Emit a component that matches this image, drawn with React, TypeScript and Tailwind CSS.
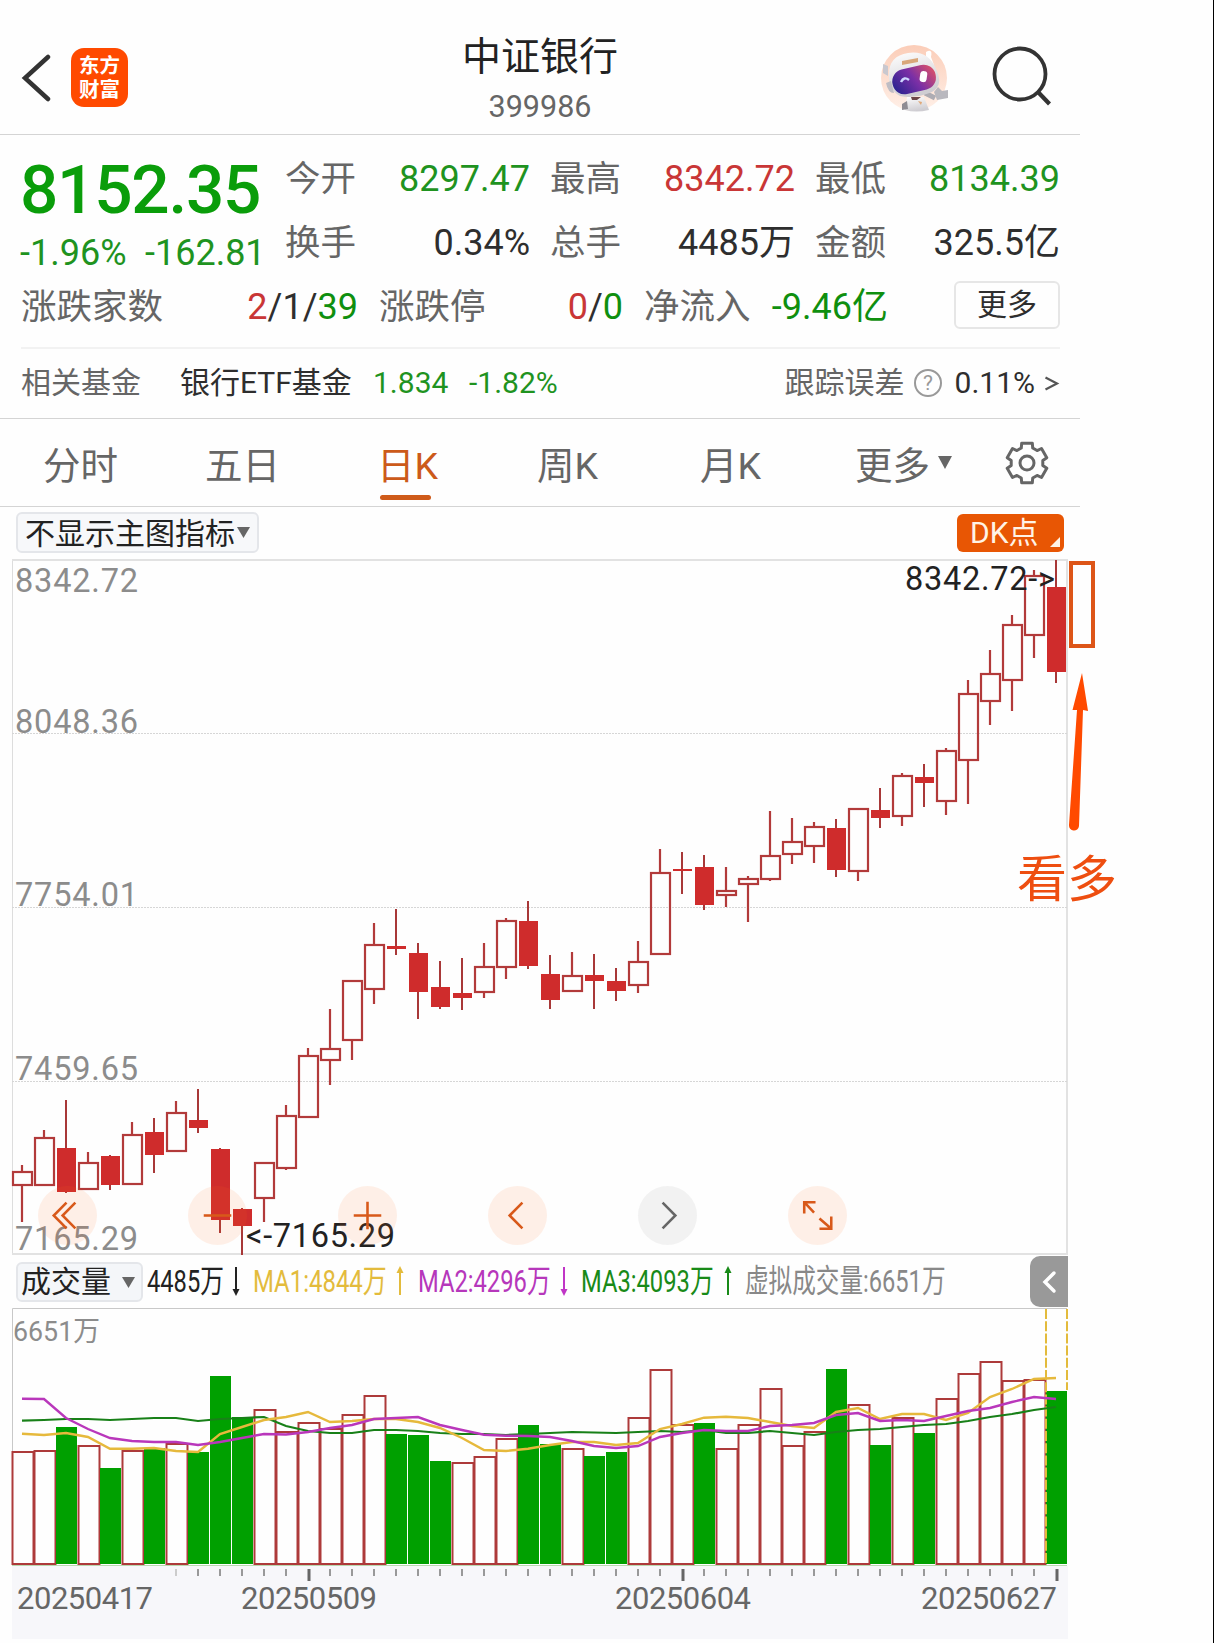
import React from 'react';

// [high, top, bottom, low, kind] in chart pixels, kind: 'h' hollow (up), 'f' filled (down)
type Candle = [number, number, number, number, 'h' | 'f'];

const candles: Candle[] = [
  [1165, 1171, 1186, 1222, 'h'],
  [1130, 1137, 1186, 1186, 'h'],
  [1100, 1148, 1192, 1193, 'f'],
  [1152, 1162, 1190, 1190, 'h'],
  [1155, 1156, 1185, 1190, 'f'],
  [1122, 1134, 1185, 1185, 'h'],
  [1118, 1132, 1155, 1173, 'f'],
  [1101, 1112, 1152, 1152, 'h'],
  [1089, 1120, 1128, 1133, 'f'],
  [1148, 1149, 1220, 1233, 'f'],
  [1208, 1209, 1226, 1255, 'f'],
  [1162, 1162, 1199, 1222, 'h'],
  [1105, 1115, 1169, 1170, 'h'],
  [1048, 1055, 1118, 1118, 'h'],
  [1009, 1048, 1061, 1085, 'h'],
  [980, 980, 1041, 1060, 'h'],
  [923, 944, 990, 1004, 'h'],
  [909, 946, 949, 955, 'f'],
  [943, 953, 992, 1019, 'f'],
  [961, 987, 1007, 1009, 'f'],
  [958, 993, 998, 1010, 'f'],
  [943, 966, 993, 998, 'h'],
  [918, 920, 968, 979, 'h'],
  [901, 921, 966, 969, 'f'],
  [955, 974, 1000, 1009, 'f'],
  [952, 975, 992, 992, 'h'],
  [954, 975, 981, 1009, 'f'],
  [968, 981, 991, 1001, 'f'],
  [941, 961, 986, 993, 'h'],
  [849, 872, 955, 955, 'h'],
  [852, 869, 871, 894, 'f'],
  [855, 867, 905, 910, 'f'],
  [867, 890, 896, 907, 'h'],
  [876, 878, 885, 922, 'h'],
  [811, 855, 880, 881, 'h'],
  [818, 841, 855, 864, 'h'],
  [822, 826, 847, 863, 'h'],
  [819, 828, 870, 877, 'f'],
  [808, 808, 872, 881, 'h'],
  [788, 810, 818, 828, 'f'],
  [773, 775, 817, 826, 'h'],
  [764, 777, 783, 807, 'f'],
  [748, 750, 802, 815, 'h'],
  [680, 693, 761, 804, 'h'],
  [650, 673, 702, 725, 'h'],
  [615, 624, 681, 711, 'h'],
  [570, 575, 636, 658, 'h'],
  [560, 587, 672, 683, 'f'],
];

const volumes = [
  1451, 1450, 1427, 1445, 1468, 1450, 1448, 1443, 1452, 1376, 1417, 1409, 1431, 1422, 1428, 1414,
  1395, 1434, 1435, 1461, 1462, 1456, 1438, 1425, 1444, 1448, 1456, 1452, 1417, 1369, 1424, 1423,
  1448, 1424, 1388, 1445, 1431, 1369, 1404, 1445, 1417, 1433, 1398, 1373, 1361, 1380, 1379, 1391,
];

// indexes of the falling days in the volume chart
const greenDays = [2, 4, 6, 8, 9, 10, 17, 18, 19, 23, 24, 26, 27, 31, 37, 39, 41, 47];

const ma1 = [
  1433.7, 1435, 1433, 1437, 1448.7, 1448.7, 1448, 1451, 1452, 1434, 1427, 1420, 1417, 1412, 1422, 1421,
  1419, 1419, 1422, 1428, 1438, 1450, 1451, 1448.7, 1445, 1442, 1442, 1445, 1443, 1429, 1424, 1417.7,
  1416.7, 1418, 1422, 1426, 1428, 1412, 1408, 1419, 1414, 1414, 1420, 1413, 1397, 1389, 1379, 1378,
];
const ma2 = [
  1398.7, 1399, 1418, 1429, 1438, 1441, 1442, 1442, 1445, 1442, 1438, 1434, 1434.5, 1432, 1428, 1425,
  1419, 1418, 1417, 1425, 1430, 1434.7, 1435.7, 1436, 1437, 1441, 1446, 1448, 1446, 1437, 1433, 1430,
  1431, 1431, 1426, 1425, 1423, 1415, 1413, 1421, 1420, 1421, 1416, 1411, 1408, 1402, 1397, 1399,
];
const ma3 = [
  1420.7, 1420, 1419, 1419, 1420, 1419, 1418, 1418, 1421, 1419, 1418, 1417, 1426, 1431, 1433, 1433,
  1430, 1430, 1431, 1433, 1434, 1434, 1435, 1434, 1433, 1432, 1432.5, 1433, 1432, 1431, 1432, 1430,
  1433, 1433, 1431, 1433, 1435, 1432, 1430, 1429, 1427, 1425, 1424, 1421, 1417, 1414, 1410, 1407,
];

const cx = (i: number) => 22 + 22 * i;
const toPoints = (ys: number[]) => ys.map((y, i) => `${cx(i)},${y}`).join(' ');

const gearPath = () => {
  const pts: string[] = [];
  for (let k = 0; k < 6; k++) {
    const base = -90 + 60 * k;
    [
      [-21, 16],
      [-15, 20.5],
      [15, 20.5],
      [21, 16],
    ].forEach(([a, r]) => {
      const t = ((base + a) * Math.PI) / 180;
      pts.push(`${(22 + r * Math.cos(t)).toFixed(2)} ${(22 + r * Math.sin(t)).toFixed(2)}`);
    });
  }
  return `M${pts.join('L')}Z`;
};

const Robot: React.FC = () => (
  <svg width="70" height="68" viewBox="0 0 70 68">
    <defs>
      <linearGradient id="visor" x1="0" y1="0.6" x2="1" y2="0.3">
        <stop offset="0" stopColor="#2f2391" />
        <stop offset="0.5" stopColor="#7a2fa6" />
        <stop offset="1" stopColor="#d9506b" />
      </linearGradient>
      <linearGradient id="halo" x1="0" y1="0" x2="0" y2="1">
        <stop offset="0" stopColor="#fbcdb8" />
        <stop offset="1" stopColor="#fff0e8" />
      </linearGradient>
      <linearGradient id="shell" x1="0" y1="0" x2="0.3" y2="1">
        <stop offset="0" stopColor="#ffffff" />
        <stop offset="1" stopColor="#cfcdd2" />
      </linearGradient>
    </defs>
    <circle cx="34" cy="34" r="33" fill="url(#halo)" />
    <path d="M46 8q7-4 5 5l3 8-8-4z" fill="#fff" />
    <path d="M3 20l5 2v10l-5-3z" fill="#c9c8cf" />
    <path d="M27 53h17l5 13q-13 3-24 0z" fill="url(#shell)" />
    <path d="M31 53h10l-4 3h-5z" fill="#6d4548" />
    <path d="M38 57l4 1-1 3z" fill="#e0a878" />
    <path d="M22 60l5-3 1 8-6 1z" fill="#8f8c93" />
    <path d="M45 49l10 5" stroke="#aeacb3" strokeWidth="5" fill="none" />
    <path d="M54 48l4-5 4 4 6-1v8l-11 2z" fill="#b9b8be" />
    <path d="M9 30Q9 12 28 9Q48 6 56 25Q64 41 52 48Q35 55 20 52Q8 46 9 30Z" fill="url(#shell)" />
    <path d="M6 39q2 10 8 10l-3-12z" fill="#bfbdc4" />
    <path d="M22 17l16-3v4l-16 3z" fill="#d9a77a" />
    <rect x="12" y="23" width="44" height="25" rx="12" fill="url(#visor)" transform="rotate(-13 34 35)" />
    <path d="M21 38q3-6 8-2" stroke="#cfd8ff" strokeWidth="2.4" fill="none" />
    <rect x="40" y="27" width="7" height="11" rx="3" fill="#fff" transform="rotate(8 43 32)" />
  </svg>
);

const Header: React.FC = () => (
  <header className="flex h-[135px] items-start border-b border-[#d4d4d4]">
    <svg className="ml-[20px] mt-[54px]" width="32" height="48" viewBox="0 0 32 48">
      <path d="M28 3L5 24L28 45" fill="none" stroke="#333" strokeWidth="4.500" strokeLinecap="round" />
    </svg>
    <div className="ml-[19px] mt-[48px] h-[59px] w-[57px] rounded-[13px] bg-[#ff4a00] pt-[4px] text-center font-['Noto_Sans_CJK_SC',sans-serif] text-[20.500px] font-bold leading-[24px] text-white">
      东方
      <br />
      财富
    </div>
    <div className="ml-[334px] mt-[29px] flex w-[156px] flex-col items-center">
      <h1 className="whitespace-nowrap text-[39px] leading-[56px] text-[#222]">中证银行</h1>
      <span className="mt-[4px] text-[30.500px] leading-[36px] text-[#666]">399986</span>
    </div>
    <div className="ml-[262px] mt-[44px]">
      <Robot />
    </div>
    <svg className="ml-[42px] mt-[46px]" width="62" height="62" viewBox="0 0 62 62">
      <circle cx="28" cy="28" r="25.500" fill="none" stroke="#333" strokeWidth="3.800" />
      <path d="M46 46L57.500 58" stroke="#333" strokeWidth="4.200" />
    </svg>
  </header>
);

const Quote: React.FC = () => (
  <section className="h-[284px] border-b border-[#d4d4d4] pl-[21px] pr-[20px]">
    <div className="flex h-[134px]">
      <div className="w-[264px] text-[#0a9d0a]">
        <div className="-ml-px pt-[19px] text-[67.500px] font-medium leading-[72px] tracking-[-1.250px]">8152.35</div>
        <div className="mt-[7px] flex whitespace-nowrap text-[36px] leading-[40px] text-[#1f931f]">
          <span className="-ml-px w-[125px]">-1.96%</span>
          <span>-162.81</span>
        </div>
      </div>
      <div className="grid grid-cols-[245px_20px_245px_20px_245px] content-start pt-[12px] text-[36px] leading-[64px] text-[#2e2e2e]">
        <Field label="今开" value="8297.47" tone="text-[#1f931f]" />
        <i />
        <Field label="最高" value="8342.72" tone="text-[#c93636]" />
        <i />
        <Field label="最低" value="8134.39" tone="text-[#1f931f]" />
        <Field label="换手" value="0.34%" />
        <i />
        <Field label="总手" value="4485万" />
        <i />
        <Field label="金额" value="325.5亿" />
      </div>
    </div>
    <div className="flex h-[78px] items-start text-[36px] leading-[64px] text-[#2e2e2e]">
      <div className="mt-[6px] flex w-[337px] justify-between">
        <span className="text-[35.500px] text-[#666]">涨跌家数</span>
        <span>
          <span className="text-[#c93636]">2</span>/1/<span className="text-[#0f8f0f]">39</span>
        </span>
      </div>
      <div className="ml-[21px] mt-[6px] flex w-[244px] justify-between">
        <span className="text-[35.500px] text-[#666]">涨跌停</span>
        <span>
          <span className="text-[#c93636]">0</span>/<span className="text-[#0f8f0f]">0</span>
        </span>
      </div>
      <div className="ml-[21px] mt-[6px] flex w-[244px] justify-between">
        <span className="text-[35.500px] text-[#666]">净流入</span>
        <span className="text-[#0f8f0f]">-9.46亿</span>
      </div>
      <button className="ml-auto mt-[12px] h-[48px] w-[106px] rounded-[6px] border-2 border-[#e6e6e6] text-[30px] leading-[44px] text-[#2e2e2e]">
        更多
      </button>
    </div>
    <div className="flex h-[69px] items-center border-t-2 border-[#f2f2f2] text-[30px] text-[#2e2e2e]">
      <span className="w-[159px] text-[#666]">相关基金</span>
      <span className="w-[193px] whitespace-nowrap">银行ETF基金</span>
      <span className="w-[96px] text-[#1f931f]">1.834</span>
      <span className="text-[#1f931f]">-1.82%</span>
      <span className="ml-auto text-[#666]">跟踪误差</span>
      <svg className="ml-[8px]" width="30" height="30" viewBox="0 0 30 30">
        <circle cx="15" cy="15" r="13" fill="none" stroke="#999" strokeWidth="2" />
        <text x="15" y="22" textAnchor="middle" fontSize="21" fill="#999">
          ?
        </text>
      </svg>
      <span className="ml-[12px]">0.11%</span>
      <svg className="ml-[9px]" width="16" height="16" viewBox="0 0 16 16">
        <path d="M1.500 2.500L13 8.500L1.500 14.500" fill="none" stroke="#555" strokeWidth="2.200" />
      </svg>
    </div>
  </section>
);

const Field: React.FC<{ label: string; value: string; tone?: string }> = ({ label, value, tone = 'text-[#2e2e2e]' }) => (
  <div className="flex justify-between whitespace-nowrap">
    <span className="text-[35.500px] text-[#666]">{label}</span>
    <span className={tone}>{value}</span>
  </div>
);

const Tabs: React.FC = () => (
  <nav className="flex h-[88px] items-start border-b border-[#d4d4d4] pt-[18px] text-[37.500px] leading-[58px] text-[#666]">
    <span className="ml-[43px] w-[162px]">分时</span>
    <span className="w-[172px]">五日</span>
    <span className="flex w-[160px] flex-col text-[#cc5a1a]">
      日K
      <span className="ml-[3px] h-[5px] w-[51px] rounded-full bg-[#cf5b1a]" />
    </span>
    <span className="w-[163px]">周K</span>
    <span className="w-[155px]">月K</span>
    <span>更多</span>
    <svg className="ml-[8px] mt-[19px]" width="14" height="13" viewBox="0 0 14 13">
      <path d="M0 0H14L7 13Z" fill="#666" />
    </svg>
    <svg className="ml-[53px] mt-[4px]" width="44" height="44" viewBox="0 0 44 44">
      <path d={gearPath()} fill="none" stroke="#666" strokeWidth="3" strokeLinejoin="round" />
      <circle cx="22" cy="22" r="7" fill="none" stroke="#666" strokeWidth="3" />
    </svg>
  </nav>
);

const IndicatorBar: React.FC = () => (
  <div className="flex h-[52px] items-start pl-[16px] pr-[16px] pt-[5px]">
    <button className="flex h-[41px] w-[243px] items-center rounded-[6px] border-2 border-[#e4e6ea] bg-[#f7f8fa] pl-[7px] text-[30px] leading-[36px] text-[#222]">
      <span className="whitespace-nowrap pt-[2px]">不显示主图指标</span>
      <svg className="ml-[2px]" width="14" height="12" viewBox="0 0 14 12">
        <path d="M0 0H13L6.500 11Z" fill="#666" />
      </svg>
    </button>
    <button className="ml-auto mt-[2px] flex h-[38px] w-[107px] items-end rounded-[6px] bg-[#e85604] pl-[13px] text-[30px] leading-[38px] text-[#fff3e6]">
      DK点
      <svg className="mb-[5px] ml-[11px]" width="10" height="10" viewBox="0 0 10 10">
        <path d="M10 0V10H0Z" fill="#fff3e6" />
      </svg>
    </button>
  </div>
);

const gridLines = [733.5, 907.5, 1081.5];
const axisLabels = [
  { y: 592, text: '8342.72' },
  { y: 733, text: '8048.36' },
  { y: 906, text: '7754.01' },
  { y: 1080, text: '7459.65' },
  { y: 1250, text: '7165.29' },
];

const PriceChart: React.FC = () => (
  <div className="relative h-[696px]">
    <svg className="block overflow-visible" width="1080" height="696" viewBox="0 559 1080 696">
      <path d="M12.500 560V1254" stroke="#ddd" strokeWidth="1" />
      <path d="M12 560H1067V1254H12" fill="none" stroke="#e2e2e2" strokeWidth="2" />
      {gridLines.map((y) => (
        <path key={y} d={`M12 ${y}H1067`} stroke="#d6d6d6" strokeDasharray="2 1" />
      ))}
      {axisLabels.map((l) => (
        <text key={l.text} x="15" y={l.y} fontSize="32.500" fill="#8c8c8c" textLength="123">
          {l.text}
        </text>
      ))}
      {candles.map(([high, top, bottom, low, kind], i) => {
        const x = cx(i);
        return kind === 'f' ? (
          <g key={i} fill="#cf2c2c">
            <rect x={x - 1} y={high} width="2" height={low - high} fill="#a83838" />
            <rect x={x - 9} y={top} width="19" height={bottom - top} />
          </g>
        ) : (
          <g key={i} fill="none" stroke="#b23a3a" strokeWidth="2.200">
            <path d={`M${x} ${high}V${top}M${x} ${bottom}V${low}`} />
            <rect x={x - 9} y={top + 1} width="19" height={bottom - top - 2} />
          </g>
        );
      })}
      <text x="246" y="1247" fontSize="32.500" fill="#222" textLength="149">
        {'<-7165.29'}
      </text>
      <text x="905" y="590" fontSize="32.500" fill="#222" textLength="150">
        {'8342.72->'}
      </text>

      {/* Hand-drawn forecast */}
      <rect x="1071" y="563" width="22" height="83" fill="none" stroke="#dd5518" strokeWidth="4" />
      <path d="M1082 673L1088 711L1083 710L1079 826A5 5 0 0 1 1069 825L1077 710L1072.500 710Z" fill="#ff4a00" />
      <text x="1017" y="897" fontSize="50" fill="#ee4e10" className="font-['Noto_Sans_CJK_SC',sans-serif]">
        看多
      </text>
    </svg>

    {/* Floating chart controls */}
    <div className="absolute left-[38px] top-[627px] flex gap-[91px]">
      <Control>
        <path d="M29 17L16 30L29 43M38 17L25 30L38 43" />
      </Control>
      <Control>
        <path d="M16 30H44" />
      </Control>
      <Control>
        <path d="M16 30H44M30 16V44" />
      </Control>
      <Control>
        <path d="M35 17L22 30L35 43" />
      </Control>
      <Control muted>
        <path d="M25 17L38 30L25 43" />
      </Control>
      <Control>
        <path d="M16.500 28V16.500H28M17 17L26.500 27M32 33L43.500 43M44 31V43.500H32" />
      </Control>
    </div>
  </div>
);

const Control: React.FC<{ muted?: boolean; children: React.ReactNode }> = ({ muted, children }) => (
  <button className={`h-[59px] w-[59px] rounded-full ${muted ? 'bg-[#ececec]/70' : 'bg-[#ff6a1e]/10'}`}>
    <svg width="59" height="59" viewBox="0 0 60 60" fill="none" stroke={muted ? '#666' : '#d8591a'} strokeWidth="2.600">
      {children}
    </svg>
  </button>
);

const Arrow: React.FC<{ up?: boolean; color: string }> = ({ up, color }) => (
  <svg width="10" height="30" viewBox="0 0 10 30" className={up ? '' : 'rotate-180'}>
    <path d="M5 3V29" stroke={color} strokeWidth="2" />
    <path d="M5 0L8.500 7H1.500Z" fill={color} />
  </svg>
);

const VolumeBar: React.FC = () => (
  <div className="flex h-[53px] items-start whitespace-nowrap pl-[16px] text-[32px] leading-[40px]">
    <button className="mt-[7px] flex h-[40px] w-[127px] items-center rounded-[6px] border-2 border-[#e4e6ea] bg-[#f4f6f9] pl-[3px] text-[30px] leading-[36px] text-[#222]">
      成交量
      <svg className="ml-[11px]" width="13" height="11" viewBox="0 0 13 11">
        <path d="M0 0H13L6.500 11Z" fill="#666" />
      </svg>
    </button>
    <div className="mt-[6px] flex w-[887px] items-center">
      <span className="ml-[4px] w-[84px] origin-left scale-x-[0.740] text-[#222]">4485万</span>
      <Arrow color="#222" />
      <span className="ml-[12px] w-[142px] origin-left scale-x-[0.748] text-[#e3bb3c]">MA1:4844万</span>
      <Arrow up color="#e3bb3c" />
      <span className="ml-[13px] w-[141px] origin-left scale-x-[0.742] text-[#b637bb]">MA2:4296万</span>
      <Arrow color="#c035c6" />
      <span className="ml-[12px] w-[142px] origin-left scale-x-[0.742] text-[#188a18]">MA3:4093万</span>
      <Arrow up color="#188a18" />
      <span className="ml-[12px] w-[202px] origin-left scale-x-[0.738] text-[#888]">虚拟成交量:6651万</span>
    </div>
    <button className="mt-[1px] flex h-[51px] w-[38px] items-center justify-center rounded-l-[10px] bg-[#999]">
      <svg width="16" height="24" viewBox="0 0 16 24">
        <path d="M13 3L4 12L13 21" fill="none" stroke="#fff" strokeWidth="3.500" strokeLinecap="round" />
      </svg>
    </button>
  </div>
);

const dates = [
  { x: 17, text: '20250417' },
  { x: 241, text: '20250509' },
  { x: 615, text: '20250604' },
  { x: 921, text: '20250627' },
];

const VolumeChart: React.FC = () => (
  <svg className="block" width="1080" height="335" viewBox="0 1308 1080 335">
    <rect x="12" y="1566" width="1056" height="73" fill="#f7f7fa" />
    <path d="M12.500 1565V1308.500H1067" fill="none" stroke="#c8c8c8" />
    <path d="M12 1565.500H1067" stroke="#b9d8b0" />
    <text x="13" y="1341" fontSize="28" fill="#8c8c8c" textLength="87" lengthAdjust="spacingAndGlyphs">
      6651万
    </text>
    {volumes.map((y, i) =>
      greenDays.includes(i) ? (
        <rect key={i} x={cx(i) - 10} y={y} width="21" height={1564 - y} fill="#00a000" />
      ) : (
        <rect key={i} x={cx(i) - 9.5} y={y + 1} width="21" height={1563 - y} fill="none" stroke="#ad3a3a" strokeWidth="2" />
      )
    )}
    <path d="M1046 1309V1564M1067 1309V1390" stroke="#e3bb3c" strokeWidth="2" strokeDasharray="10 2.200" />
    <polyline points={toPoints(ma3)} fill="none" stroke="#188018" strokeWidth="2.200" />
    <polyline points={toPoints(ma1)} fill="none" stroke="#e6b93c" strokeWidth="2.400" />
    <polyline points={toPoints(ma2)} fill="none" stroke="#b937bb" strokeWidth="2.400" />
    {candles.map((_, i) => {
      if (i < 7) return null;
      const major = i === 13 || i === 30 || i === 47;
      return (
        <rect
          key={i}
          x={cx(i) - (major ? 0.5 : 1)}
          y="1569"
          width={major ? 3 : 2}
          height={major ? 12 : 7}
          fill={i === 7 ? '#ccc' : major ? '#666' : '#999'}
        />
      );
    })}
    {dates.map((d) => (
      <text key={d.text} x={d.x} y="1609" fontSize="31" fill="#666" textLength="136">
        {d.text}
      </text>
    ))}
  </svg>
);

export default function App() {
  return (
    <div className="flex h-[1643px] w-[1214px] justify-between overflow-hidden bg-[#fefefe] font-['Roboto','Noto_Sans_CJK_SC',sans-serif]">
      <main className="flex w-[1080px] flex-col">
        <Header />
        <Quote />
        <Tabs />
        <IndicatorBar />
        <PriceChart />
        <VolumeBar />
        <VolumeChart />
      </main>
      <div className="w-px bg-black" />
    </div>
  );
}
